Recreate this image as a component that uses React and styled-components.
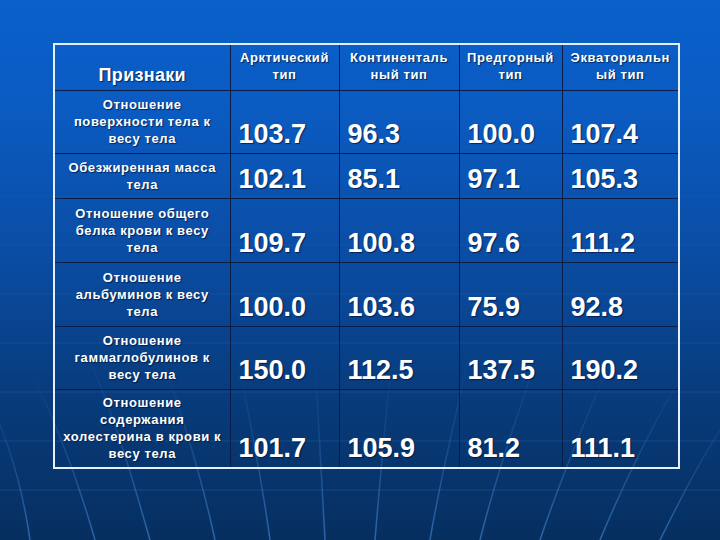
import React from "react";
import styled, { createGlobalStyle } from "styled-components";

const Global = createGlobalStyle`
  html, body { margin: 0; padding: 0; }
  body { width: 720px; height: 540px; overflow: hidden; background: #06305e; }
`;

const Slide = styled.div`
  position: relative;
  width: 720px;
  height: 540px;
  overflow: hidden;
  box-sizing: border-box;
  padding: 43px 0 0 53px;
  background: linear-gradient(180deg, #0b60cc 0%, #0a5ac0 22%, #0a4ca2 48%, #083c7d 72%, #062f60 100%);
  font-family: "Liberation Sans", Arial, sans-serif;
`;

const Backdrop = styled.svg`
  position: absolute;
  inset: 0;
  width: 720px;
  height: 540px;
  pointer-events: none;
`;

const Table = styled.table`
  position: relative;
  border-collapse: collapse;
  table-layout: fixed;
  width: 625px;
  border: 2px solid #e4f0ff;
`;

const Row = styled.tr`
  height: ${(p) => p.$h}px;
`;

const Cell = styled.td`
  border: 1px solid #0a1d48;
  padding: 0;
  color: #ffffff;
  font-weight: bold;
  text-shadow: 1px 1px 1px rgba(0, 20, 60, 0.75);
  white-space: nowrap;
`;

const HeadTitle = styled(Cell)`
  text-align: center;
  vertical-align: bottom;
  font-size: 18px;
  line-height: 22px;
  padding-bottom: 4px;
  letter-spacing: 0.3px;
`;

const HeadCell = styled(Cell)`
  text-align: center;
  vertical-align: middle;
  font-size: 13px;
  line-height: 17px;
  letter-spacing: 0.6px;
  padding: 0 0 2px 0;
`;

const Label = styled(Cell)`
  text-align: center;
  vertical-align: middle;
  font-size: 13px;
  line-height: 17px;
  letter-spacing: 0.6px;
  padding: 0;
`;

const Num = styled(Cell)`
  text-align: left;
  vertical-align: bottom;
  font-size: 27px;
  line-height: 30px;
  padding: 0 0 4px 8px;
`;

const Lines = ({ lines }) =>
  lines.map((l, i) => (
    <React.Fragment key={i}>
      {i > 0 && <br />}
      {l}
    </React.Fragment>
  ));

const cols = [
  { w: 176 },
  { w: 109, h: ["Арктический", "тип"] },
  { w: 120, h: ["Континенталь", "ный тип"] },
  { w: 103, h: ["Предгорный", "тип"] },
  { w: 117, h: ["Экваториальн", "ый тип"] },
];

const rows = [
  { h: 63, label: ["Отношение", "поверхности тела к", "весу тела"], v: ["103.7", "96.3", "100.0", "107.4"] },
  { h: 45, label: ["Обезжиренная масса", "тела"], v: ["102.1", "85.1", "97.1", "105.3"] },
  { h: 64, label: ["Отношение общего", "белка крови к весу", "тела"], v: ["109.7", "100.8", "97.6", "111.2"] },
  { h: 64, label: ["Отношение", "альбуминов к весу", "тела"], v: ["100.0", "103.6", "75.9", "92.8"] },
  { h: 63, label: ["Отношение", "гаммаглобулинов к", "весу тела"], v: ["150.0", "112.5", "137.5", "190.2"] },
  { h: 79, label: ["Отношение", "содержания", "холестерина в крови к", "весу тела"], v: ["101.7", "105.9", "81.2", "111.1"] },
];

const streaks = [
  "M30 540 C 20 470, 0 420, -20 380",
  "M95 540 C 75 470, 55 420, 30 370",
  "M150 540 C 130 470, 110 400, 80 340",
  "M215 540 C 200 470, 180 410, 160 350",
  "M270 540 C 262 480, 250 420, 238 360",
  "M325 540 C 322 480, 318 420, 315 360",
  "M375 540 C 380 480, 385 420, 392 360",
  "M430 540 C 440 480, 455 420, 470 350",
  "M480 540 C 495 480, 515 420, 540 350",
  "M540 540 C 560 480, 585 420, 615 350",
  "M600 540 C 625 480, 650 430, 690 360",
  "M660 540 C 685 490, 705 450, 740 400",
];

export default function App() {
  return (
    <>
      <Global />
      <Slide>
        <Backdrop viewBox="0 0 720 540">
          <defs>
            <linearGradient id="fade" x1="0" y1="0" x2="0" y2="1">
              <stop offset="0" stopColor="#5aa8ff" stopOpacity="0" />
              <stop offset="0.45" stopColor="#5aa8ff" stopOpacity="0.15" />
              <stop offset="1" stopColor="#5aa8ff" stopOpacity="0.45" />
            </linearGradient>
          </defs>
          {[147, 196, 245, 294, 343, 392, 441, 490].map((y, i) => (
            <line key={y} x1="0" x2="720" y1={y} y2={y} stroke="#4d8fe0" strokeOpacity={0.08 + i * 0.02} strokeWidth="1" />
          ))}
          <g fill="none" stroke="url(#fade)" strokeWidth="1.5">
            {streaks.map((d, i) => (
              <path key={i} d={d} />
            ))}
          </g>
        </Backdrop>
        <Table>
          <colgroup>
            {cols.map((c, i) => (
              <col key={i} style={{ width: c.w }} />
            ))}
          </colgroup>
          <tbody>
            <Row $h={46}>
              <HeadTitle>Признаки</HeadTitle>
              {cols.slice(1).map((c, i) => (
                <HeadCell key={i}>
                  <Lines lines={c.h} />
                </HeadCell>
              ))}
            </Row>
            {rows.map((r, i) => (
              <Row key={i} $h={r.h}>
                <Label>
                  <Lines lines={r.label} />
                </Label>
                {r.v.map((v, j) => (
                  <Num key={j}>{v}</Num>
                ))}
              </Row>
            ))}
          </tbody>
        </Table>
      </Slide>
    </>
  );
}
